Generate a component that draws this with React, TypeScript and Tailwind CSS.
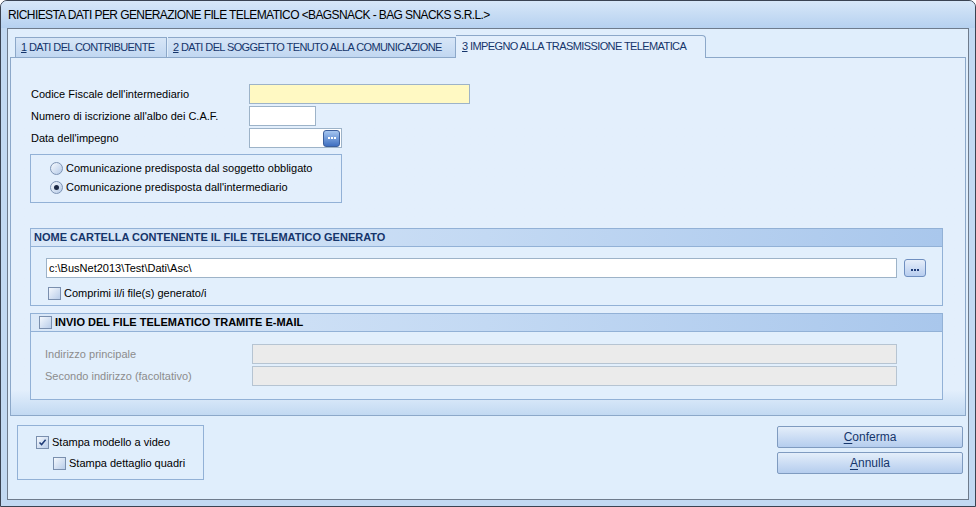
import React from 'react';

function CheckBox({ checked = false }: { checked?: boolean }) {
  return (
    <span className="relative flex h-[13px] w-[13px] shrink-0 items-center justify-center border border-[#7a8fae] bg-linear-to-br from-[#f4f8fd] to-[#b9cde9]">
      {checked && (
        <svg width="9" height="9" viewBox="0 0 9 9" className="absolute">
          <path d="M1.5 4.5 L3.6 6.6 L7.6 1.8" fill="none" stroke="#1f3c78" strokeWidth="1.5" />
        </svg>
      )}
    </span>
  );
}

function Radio({ selected = false }: { selected?: boolean }) {
  return (
    <span className="flex h-[13px] w-[13px] shrink-0 items-center justify-center rounded-full border border-[#7e94b4] bg-linear-to-br from-[#f6f9fd] to-[#b6cbe8]">
      {selected && <span className="h-[5px] w-[5px] rounded-full bg-[#1d2a45]" />}
    </span>
  );
}

function Field({ label, children }: { label: string; children: React.ReactNode }) {
  return (
    <div className="flex h-[20px] items-center">
      <span className="w-[219px] pl-[1px]">{label}</span>
      {children}
    </div>
  );
}

function GroupHeader({ children }: { children: React.ReactNode }) {
  return (
    <div className="flex h-[18px] items-center gap-[3px] border-b border-[#92b1d6] bg-linear-to-r from-[#dae8f8] via-[#c3d9f3] to-[#a9c7ec] px-[3px] text-[11px] font-bold">
      {children}
    </div>
  );
}

function Button({ hot, rest }: { hot: string; rest: string }) {
  return (
    <button
      type="button"
      className="flex h-[22px] w-[186px] items-center justify-center rounded-[2px] border border-[#7f9bc0] bg-linear-to-b from-[#e4eefa] to-[#b5cdee] text-[12px] text-[#15356b]"
    >
      <span className="underline underline-offset-2">{hot}</span>
      {rest}
    </button>
  );
}

export default function App() {
  return (
    <div className="h-[507px] w-[976px] overflow-hidden font-['Liberation_Sans',Arial,sans-serif] text-[11px] text-black">
      <div className="flex h-full w-full flex-col rounded-t-[7px] border border-[#3a4352] bg-[#c2d9f2]">
        {/* title bar */}
        <div className="flex h-[27px] items-center rounded-t-[6px] bg-linear-to-b from-[#d7e7f8] to-[#b6d1f0] pl-[7px] text-[12px] tracking-[-0.6px]">
          RICHIESTA DATI PER GENERAZIONE FILE TELEMATICO &lt;BAGSNACK - BAG SNACKS S.R.L.&gt;
        </div>

        {/* client */}
        <div className="mx-[6px] flex h-[472px] flex-col border border-[#6e7b8c] bg-[#e0eefc]">
          {/* tabs */}
          <div className="ml-[7px] flex h-[28px] items-end pt-[6px] text-[11px] tracking-[-0.6px] text-[#15356b]">
            <div className="flex h-[20px] w-[152px] items-center border border-b-0 border-[#8ca8c9] bg-linear-to-b from-[#d7e6f7] to-[#c1d7f1] pl-[5px]">
              <span className="underline">1</span>&nbsp;DATI DEL CONTRIBUENTE
            </div>
            <div className="ml-[1px] flex h-[20px] w-[288px] items-center border border-b-0 border-l-0 border-[#8ca8c9] bg-linear-to-b from-[#d7e6f7] to-[#c1d7f1] pl-[5px]">
              <span className="underline">2</span>&nbsp;DATI DEL SOGGETTO TENUTO ALLA COMUNICAZIONE
            </div>
            <div className="relative z-10 -mb-[1px] flex h-[23px] w-[250px] items-center rounded-tr-[4px] border border-b-0 border-l-0 border-[#8ca8c9] bg-[#e3effc] pb-[1px] pl-[6px]">
              <span className="underline">3</span>&nbsp;IMPEGNO ALLA TRASMISSIONE TELEMATICA
            </div>
          </div>

          {/* tab panel */}
          <div className="ml-[2px] flex h-[359px] w-[956px] flex-col border border-[#8ca8c9] bg-linear-to-b from-[#e3effc] from-[93%] to-[#c2d9f2] pl-[19px] pr-[22px] pt-[26px]">
            <Field label="Codice Fiscale dell'intermediario">
              <div className="h-[20px] w-[221px] border border-[#9db3c8] bg-[#fff9c3]" />
            </Field>
            <div className="mt-[2px]">
              <Field label="Numero di iscrizione all'albo dei C.A.F.">
                <div className="h-[20px] w-[67px] border border-[#9db3c8] bg-white" />
              </Field>
            </div>
            <div className="mt-[2px]">
              <Field label="Data dell'impegno">
                <div className="flex h-[20px] w-[93px] items-center justify-end border border-[#9db3c8] bg-white pr-[1px]">
                  <span className="flex h-[17px] w-[17px] items-center justify-center gap-[1px] rounded-[3px] border border-[#3d5f9c] bg-linear-to-b from-[#a6c6f0] to-[#3f6fc0]">
                    <span className="h-[2px] w-[2px] bg-white" />
                    <span className="h-[2px] w-[2px] bg-white" />
                    <span className="h-[2px] w-[2px] bg-white" />
                  </span>
                </div>
              </Field>
            </div>

            <div className="mt-[6px] flex h-[49px] w-[312px] flex-col border border-[#92b1d6] pl-[19px] pt-[4px]">
              <div className="flex h-[19px] items-center gap-[3px]">
                <Radio />
                <span>Comunicazione predisposta dal soggetto obbligato</span>
              </div>
              <div className="flex h-[19px] items-center gap-[3px]">
                <Radio selected />
                <span>Comunicazione predisposta dall'intermediario</span>
              </div>
            </div>

            {/* folder group */}
            <div className="mt-[25px] flex h-[78px] flex-col border border-[#92b1d6] bg-[#e2effc]">
              <GroupHeader>
                <span className="text-[#15356b]">NOME CARTELLA CONTENENTE IL FILE TELEMATICO GENERATO</span>
              </GroupHeader>
              <div className="mt-[11px] flex items-center pl-[15px]">
                <div className="flex h-[20px] w-[851px] items-center border border-[#9db3c8] bg-white pl-[2px]">
                  c:\BusNet2013\Test\Dati\Asc\
                </div>
                <span className="ml-[7px] flex h-[18px] w-[22px] items-end justify-center gap-[1px] rounded-[3px] border border-[#6f8fc0] bg-linear-to-b from-[#e6eefa] to-[#b7cdef] pb-[5px]">
                  <span className="h-[2px] w-[2px] bg-[#1f3c78]" />
                  <span className="h-[2px] w-[2px] bg-[#1f3c78]" />
                  <span className="h-[2px] w-[2px] bg-[#1f3c78]" />
                </span>
              </div>
              <div className="mt-[7px] flex items-center gap-[3px] pl-[17px]">
                <CheckBox />
                <span>Comprimi il/i file(s) generato/i</span>
              </div>
            </div>

            {/* email group */}
            <div className="mt-[7px] flex h-[87px] flex-col border border-[#92b1d6] bg-[#e2effc]">
              <GroupHeader>
                <span className="ml-[5px]">
                  <CheckBox />
                </span>
                <span>INVIO DEL FILE TELEMATICO TRAMITE E-MAIL</span>
              </GroupHeader>
              <div className="mt-[12px] flex items-center pl-[14px] text-[#8c8c8c]">
                <span className="w-[207px]">Indirizzo principale</span>
                <div className="h-[20px] w-[645px] border border-[#b6c4d2] bg-[#ebebeb]" />
              </div>
              <div className="mt-[2px] flex items-center pl-[14px] text-[#8c8c8c]">
                <span className="w-[207px]">Secondo indirizzo (facoltativo)</span>
                <div className="h-[20px] w-[645px] border border-[#b6c4d2] bg-[#ebebeb]" />
              </div>
            </div>
          </div>

          {/* bottom */}
          <div className="flex flex-1 items-start justify-between">
            <div className="ml-[9px] mt-[9px] flex h-[55px] w-[187px] flex-col border border-[#92b1d6] pl-[18px] pt-[9px]">
              <div className="flex h-[15px] items-center gap-[3px]">
                <CheckBox checked />
                <span>Stampa modello a video</span>
              </div>
              <div className="mt-[6px] flex h-[15px] items-center gap-[3px] pl-[17px]">
                <CheckBox />
                <span>Stampa dettaglio quadri</span>
              </div>
            </div>
            <div className="mr-[5px] mt-[10px] flex flex-col gap-[4px]">
              <Button hot="C" rest="onferma" />
              <Button hot="A" rest="nnulla" />
            </div>
          </div>
        </div>
      </div>
    </div>
  );
}
